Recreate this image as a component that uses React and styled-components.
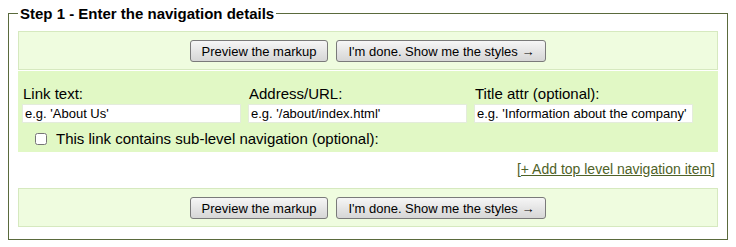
import styled, { createGlobalStyle } from "styled-components";

const GlobalStyle = createGlobalStyle`
    html, body {
        margin: 0;
        padding: 0;
        background: #fff;
        font-family: "Liberation Sans", Arial, sans-serif;
        color: #000;
    }
`

const Fieldset = styled.fieldset`
    margin: 5px 8px 0;
    padding: 9px 9px 12px;
    border: 1px solid #5a6a3c;
    min-width: 0;
`

const Legend = styled.legend`
    padding: 0 2px;
    font-size: 15px;
    font-weight: bold;
    line-height: 17px;
`

const ButtonBar = styled.div`
    display: flex;
    justify-content: center;
    gap: 8px;
    padding: 8px 0 7px;
    background-color: #effcdf;
    border: 1px solid #d6e9bf;
`

const Button = styled.button`
    height: 22px;
    padding: 0 11px;
    font-family: "Liberation Sans", Arial, sans-serif;
    font-size: 13px;
    color: #000;
    border: 1px solid #7a7a7a;
    border-radius: 3px;
    background: linear-gradient(#f6f6f6, #e4e4e4 55%, #d6d6d6);
    cursor: pointer;
`

const FieldsPanel = styled.div`
    margin-top: 1px;
    padding: 14px 4px 5px;
    background-color: #e1f8c5;
`

const FieldGrid = styled.div`
    display: grid;
    grid-template-columns: repeat(3, 219px);
    column-gap: 7px;
`

const Field = styled.label`
    display: flex;
    flex-direction: column;
    gap: 2px;
    font-size: 15px;
    line-height: 17px;
`

const LabelText = styled.span`
    padding-left: 1px;
`

const TextInput = styled.input`
    box-sizing: border-box;
    width: 219px;
    height: 19px;
    margin: 0;
    padding: 0 2px;
    font-family: "Liberation Sans", Arial, sans-serif;
    font-size: 13px;
    color: #000;
    background: #fff;
    border: 1px solid #e4ecdc;
    outline: none;
`

const CheckRow = styled.label`
    display: flex;
    align-items: center;
    gap: 9px;
    margin: 7px 0 0 13px;
    font-size: 15px;
    line-height: 17px;
`

const CheckBox = styled.input`
    width: 12px;
    height: 12px;
    margin: 0;
    accent-color: #888;
`

const LinkRow = styled.div`
    padding: 9px 3px 10px;
    text-align: right;
    font-size: 14px;
    line-height: 17px;
`

const AddLink = styled.a`
    color: #4f6228;
    text-decoration: underline;
`

function Buttons(){
    return(
        <ButtonBar>
            <Button type="button">Preview the markup</Button>
            <Button type="button">I'm done. Show me the styles &rarr;</Button>
        </ButtonBar>
    );
}

const fields = [
    { label: "Link text:", placeholder: "e.g. 'About Us'" },
    { label: "Address/URL:", placeholder: "e.g. '/about/index.html'" },
    { label: "Title attr (optional):", placeholder: "e.g. 'Information about the company'" },
];

export default function App(){
    return(
        <>
            <GlobalStyle />
            <Fieldset>
                <Legend>Step 1 - Enter the navigation details</Legend>

                <Buttons />

                <FieldsPanel>
                    <FieldGrid>
                        {fields.map(f => (
                            <Field key={f.label}>
                                <LabelText>{f.label}</LabelText>
                                <TextInput type="text" defaultValue={f.placeholder} />
                            </Field>
                        ))}
                    </FieldGrid>
                    <CheckRow>
                        <CheckBox type="checkbox" />
                        This link contains sub-level navigation (optional):
                    </CheckRow>
                </FieldsPanel>

                <LinkRow>
                    <AddLink href="#">[+ Add top level navigation item]</AddLink>
                </LinkRow>

                <Buttons />
            </Fieldset>
        </>
    );
}
